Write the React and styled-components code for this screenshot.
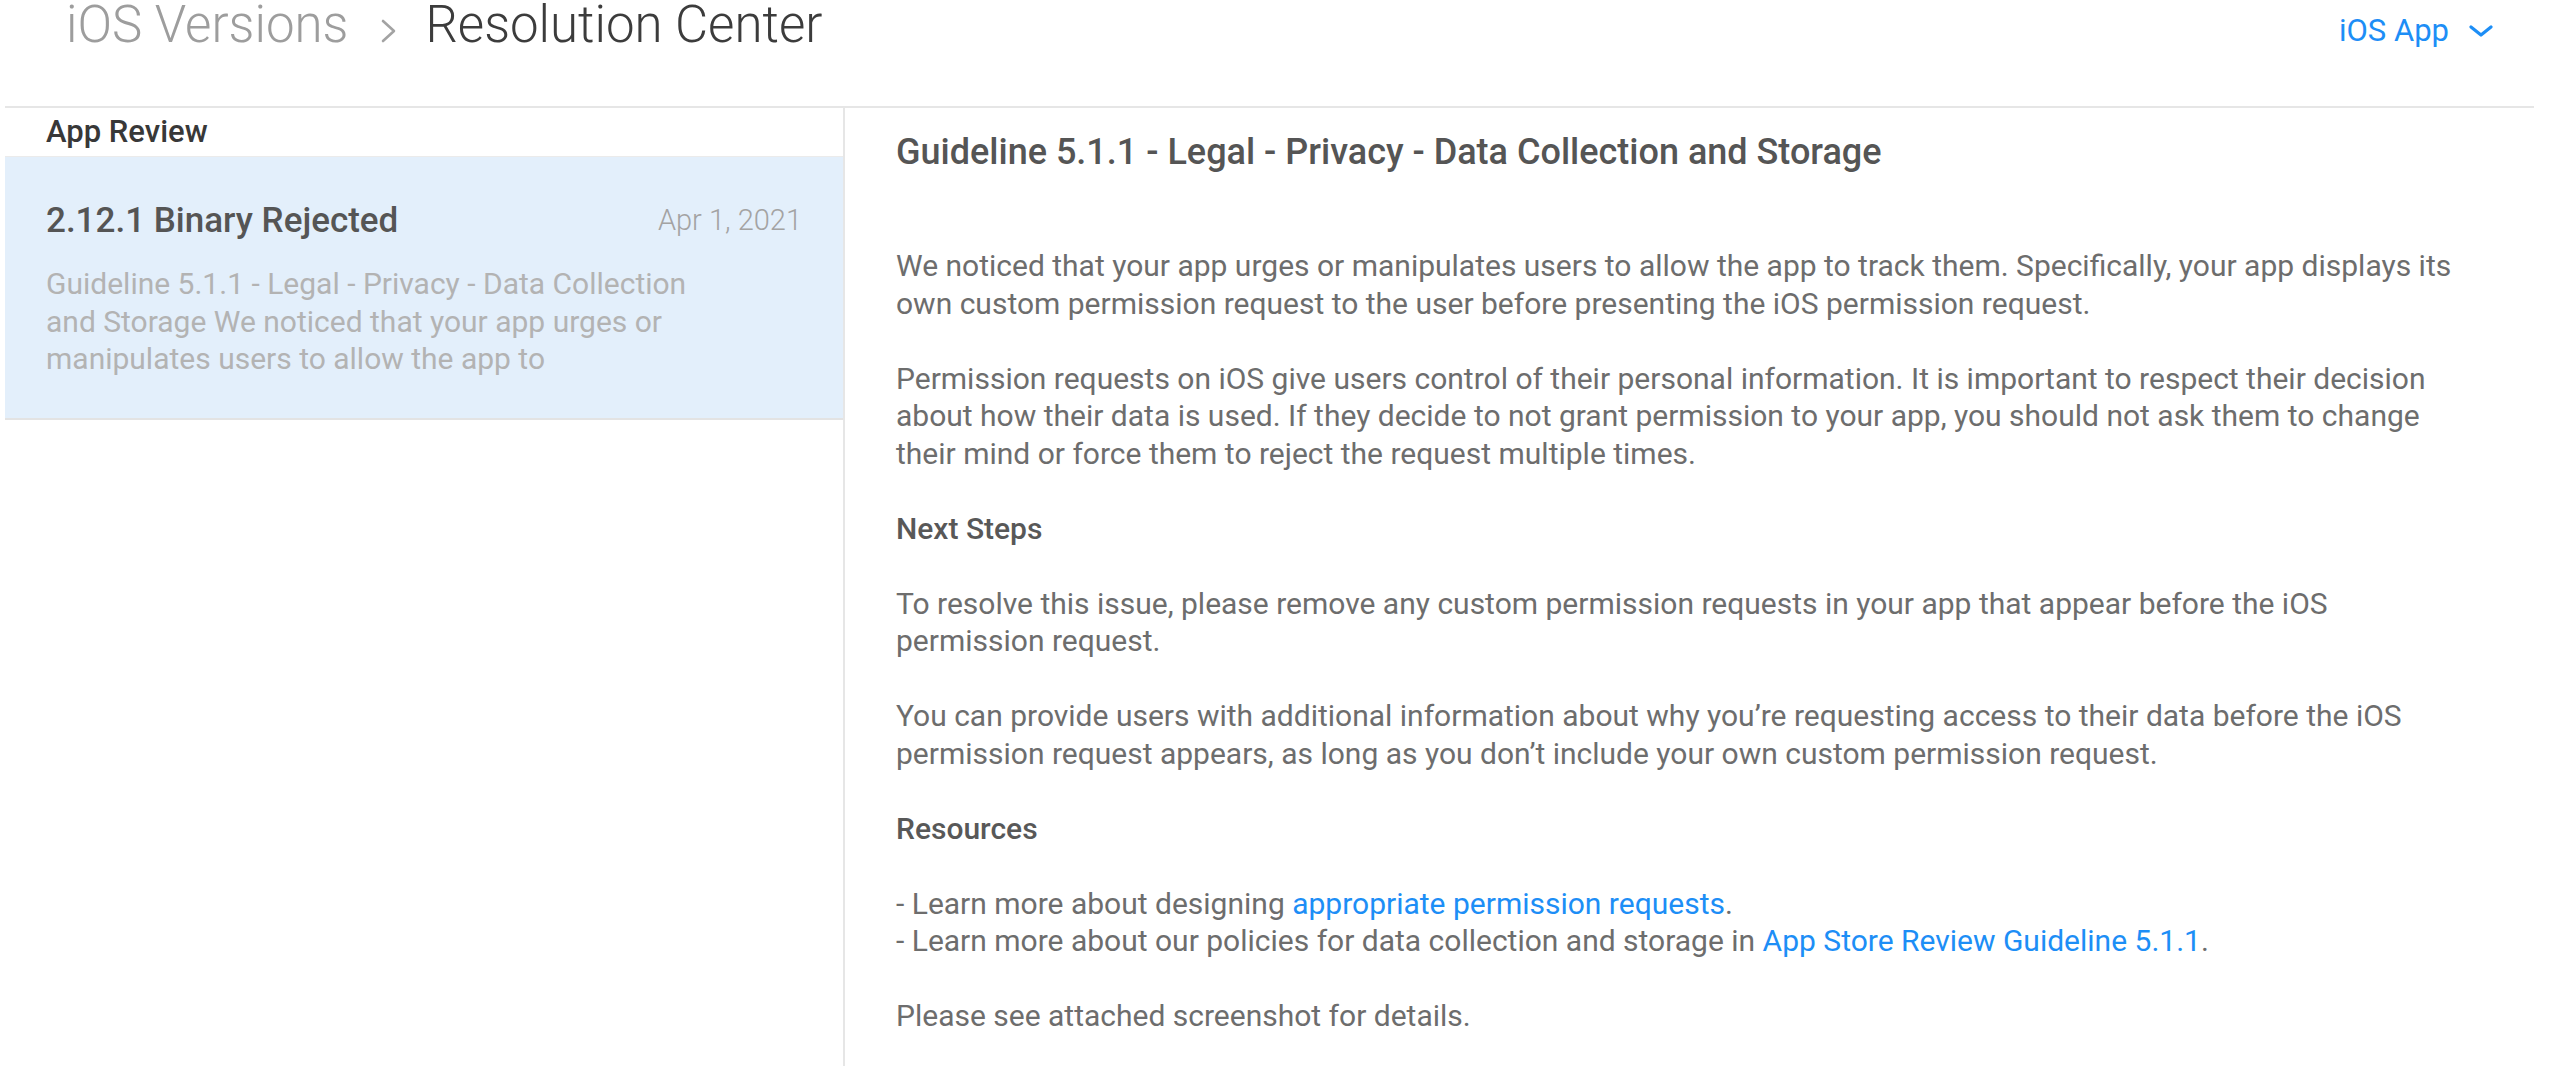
import React from 'react'
import styled, { createGlobalStyle } from 'styled-components'

const GlobalStyle = createGlobalStyle`
html, body {
    margin: 0;
    padding: 0;
    background: #ffffff;
}
body {
    font-family: Roboto, "Liberation Sans", sans-serif;
    -webkit-font-smoothing: antialiased;
}
`

const Header = styled.header`
height: 106px;
box-sizing: border-box;
padding: 0 67px 0 66px;
display: flex;
justify-content: space-between;
align-items: flex-start;
`

const Breadcrumb = styled.div`
display: flex;
align-items: flex-start;
`

const Crumb = styled.span`
font-size: 51px;
line-height: 50px;
font-weight: 300;
color: ${props => props.$current ? '#3c3c3c' : '#9d9d9d'};
`

const CrumbArrow = styled.svg`
width: 17px;
height: 24px;
margin: 19px 28px 0 32px;
`

const AppSwitch = styled.a`
display: flex;
align-items: center;
gap: 20px;
margin-top: 16px;
font-size: 31px;
line-height: 30px;
color: #1d8ef6;
text-decoration: none;
`

const Main = styled.main`
display: flex;
margin: 0 26px 0 5px;
border-top: 2px solid #e6e6e6;
min-height: calc(100vh - 108px);
`

const Sidebar = styled.aside`
width: 838px;
flex: none;
border-right: 2px solid #e6e6e6;
`

const SectionLabel = styled.div`
height: 48px;
line-height: 48px;
padding-left: 41px;
font-size: 31px;
font-weight: 500;
color: #383838;
border-bottom: 1px solid #ebebeb;
`

const ReviewItem = styled.div`
padding: 43px 41px 40px 41px;
background: ${props => props.$selected ? '#e3effb' : '#ffffff'};
border-bottom: 2px solid #e3e3e3;
`

const ItemTop = styled.div`
display: flex;
justify-content: space-between;
align-items: center;
height: 40px;
`

const ItemTitle = styled.span`
font-size: 35px;
font-weight: 500;
color: #555555;
`

const ItemDate = styled.span`
font-size: 29px;
font-weight: 300;
color: #a3a3a3;
`

const ItemExcerpt = styled.p`
margin: 25px 0 0 0;
max-width: 670px;
font-size: 30px;
line-height: 37.5px;
color: #b3b3b3;
`

const Content = styled.section`
flex: 1;
padding: 24px 0 0 51px;
`

const ContentTitle = styled.h1`
margin: 0 0 75px 0;
font-size: 36px;
line-height: 40px;
font-weight: 500;
color: #555555;
`

const Body = styled.div`
max-width: 1572px;
font-size: 30px;
line-height: 37.5px;
color: #6d6d6d;
`

const Para = styled.p`
margin: 0 0 37.5px 0;
`

const SubHeading = styled.p`
margin: 0 0 37.5px 0;
font-weight: 500;
color: #585858;
`

const Link = styled.a`
color: #1d8ef6;
text-decoration: none;
`

const excerpt = 'Guideline 5.1.1 - Legal - Privacy - Data Collection and Storage We noticed that your app urges or manipulates users to allow the app to'

const App = () => {
    return (
        <>
            <GlobalStyle />
            <Header>
                <Breadcrumb>
                    <Crumb>iOS Versions</Crumb>
                    <CrumbArrow viewBox="0 0 17 24">
                        <polyline points="3,2 14,12 3,22" fill="none" stroke="#a3a3a3" strokeWidth="2.6" strokeLinecap="round" strokeLinejoin="round" />
                    </CrumbArrow>
                    <Crumb $current>Resolution Center</Crumb>
                </Breadcrumb>
                <AppSwitch href="#">
                    iOS App
                    <svg width="24" height="12" viewBox="0 0 24 12">
                        <polyline points="2,2 12,10 22,2" fill="none" stroke="#1d8ef6" strokeWidth="3.2" strokeLinecap="round" strokeLinejoin="round" />
                    </svg>
                </AppSwitch>
            </Header>

            <Main>
                {/* Left list of review messages */}
                <Sidebar>
                    <SectionLabel>App Review</SectionLabel>
                    <ReviewItem $selected>
                        <ItemTop>
                            <ItemTitle>2.12.1 Binary Rejected</ItemTitle>
                            <ItemDate>Apr 1, 2021</ItemDate>
                        </ItemTop>
                        <ItemExcerpt>{excerpt}</ItemExcerpt>
                    </ReviewItem>
                </Sidebar>

                {/* Message body */}
                <Content>
                    <ContentTitle>Guideline 5.1.1 - Legal - Privacy - Data Collection and Storage</ContentTitle>
                    <Body>
                        <Para>We noticed that your app urges or manipulates users to allow the app to track them. Specifically, your app displays its own custom permission request to the user before presenting the iOS permission request.</Para>
                        <Para>Permission requests on iOS give users control of their personal information. It is important to respect their decision about how their data is used. If they decide to not grant permission to your app, you should not ask them to change their mind or force them to reject the request multiple times.</Para>
                        <SubHeading>Next Steps</SubHeading>
                        <Para>To resolve this issue, please remove any custom permission requests in your app that appear before the iOS permission request.</Para>
                        <Para>You can provide users with additional information about why you’re requesting access to their data before the iOS permission request appears, as long as you don’t include your own custom permission request.</Para>
                        <SubHeading>Resources</SubHeading>
                        <Para>
                            - Learn more about designing <Link href="#">appropriate permission requests</Link>.<br />
                            - Learn more about our policies for data collection and storage in <Link href="#">App Store Review Guideline 5.1.1</Link>.
                        </Para>
                        <Para>Please see attached screenshot for details.</Para>
                    </Body>
                </Content>
            </Main>
        </>
    )
}

export default App
